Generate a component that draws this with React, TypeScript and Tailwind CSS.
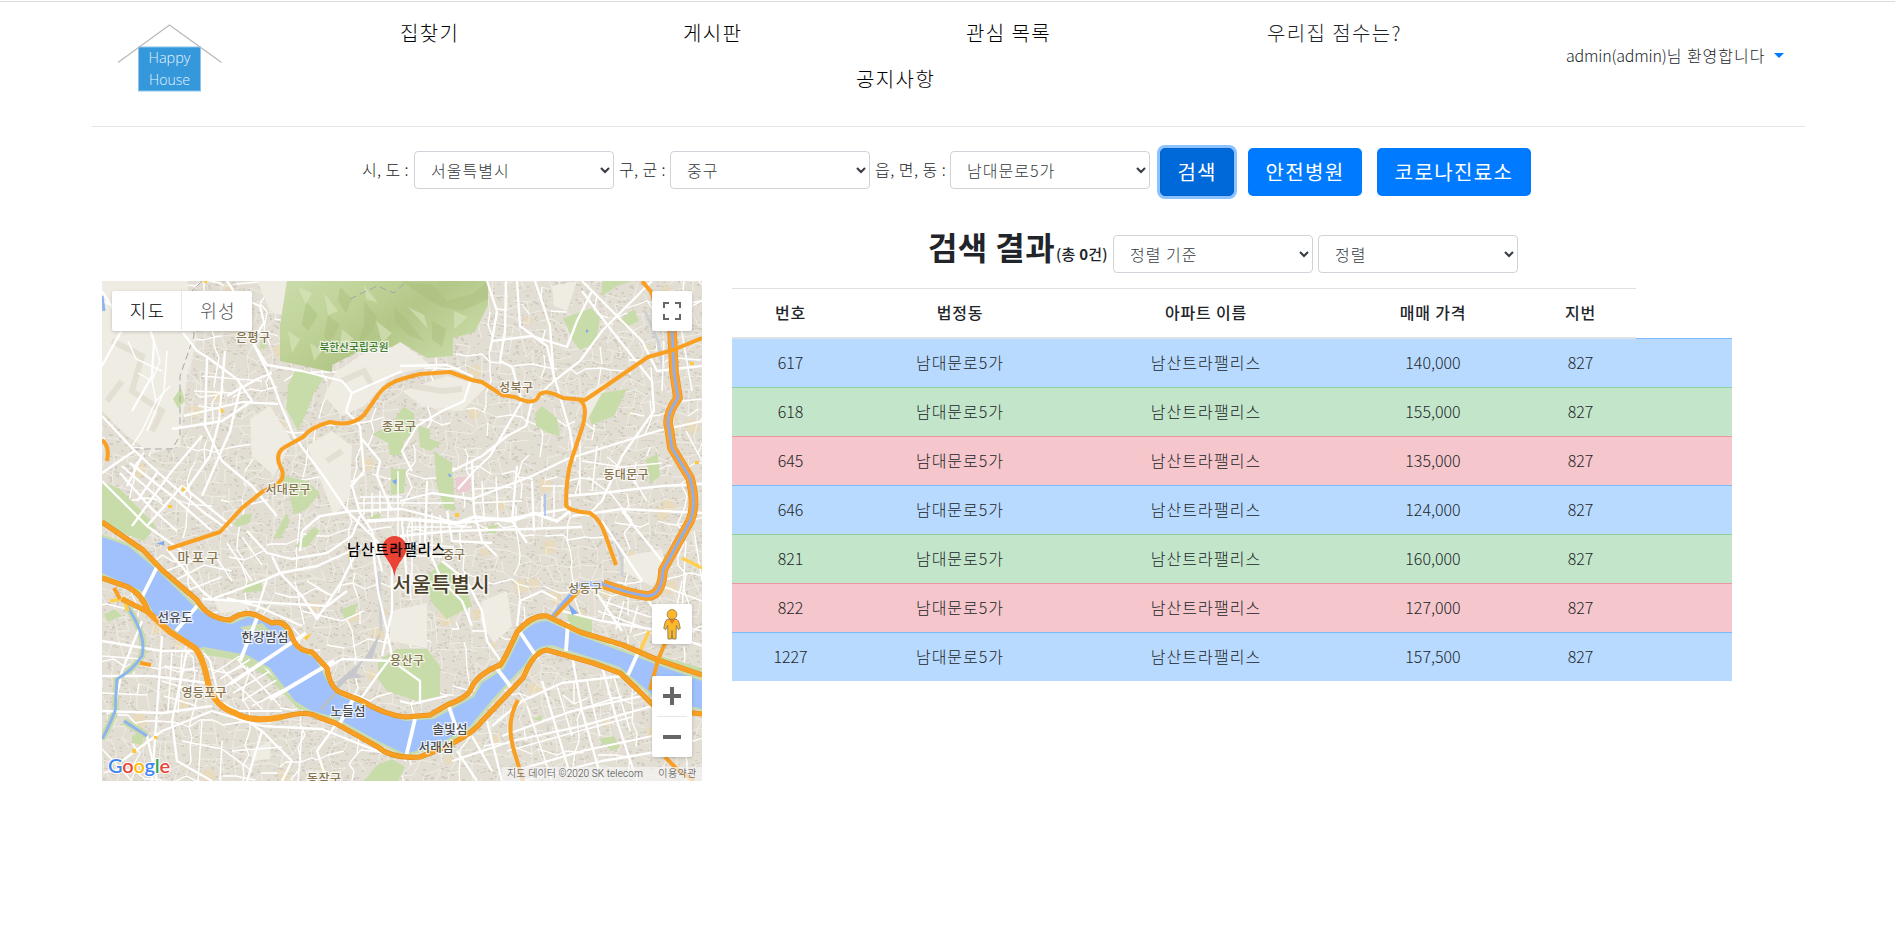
import React from "react";

const KR = "font-['Noto_Sans_CJK_KR',sans-serif]";

/* ---------- header ---------- */

function Logo() {
  return (
    <svg width="106" height="72" viewBox="0 0 106 72" className="block" fontFamily="'Open Sans', sans-serif">
      <rect x="21.5" y="24" width="62" height="44" fill="#3498db" stroke="#8cc6ee" strokeWidth="1" />
      <path d="M1 39.5 L52.5 2 L104.5 39.5" fill="none" stroke="#b9b9b9" strokeWidth="1.3" />
      <text x="52.5" y="40" fontSize="15" fill="#e6f3fc" textAnchor="middle" textLength="42" lengthAdjust="spacingAndGlyphs">Happy</text>
      <text x="52.5" y="61.5" fontSize="15" fill="#e6f3fc" textAnchor="middle" textLength="41" lengthAdjust="spacingAndGlyphs">House</text>
    </svg>
  );
}

function Header() {
  return (
    <header className="ml-[92px] flex h-[125px] w-[1713px] border-b border-[#e5e5e5]">
      <div className="w-[174px] pl-[25px] pt-[21px]">
        <Logo />
      </div>
      <nav className="w-[1221px] pt-[12px] text-[20px] leading-[38px] tracking-[1.4px] text-black">
        <div className="flex pl-[134px]">
          <a className="w-[283px]">집찾기</a>
          <a className="w-[283px]">게시판</a>
          <a className="w-[301px]">관심 목록</a>
          <a className="text-[#212529]">우리집 점수는?</a>
        </div>
        <div className="mt-[8px] pl-[590px]">
          <a>공지사항</a>
        </div>
      </nav>
      <div className="mt-[41px] flex h-[24px] flex-1 items-center whitespace-nowrap pl-[79px] text-[16px] text-[#212529]">
        <span className="tracking-[-0.2px]">admin(admin)</span>
        <span className="tracking-[1px]">님 환영합니다</span>
        <svg width="10" height="5" viewBox="0 0 10 5" className="ml-[8px]">
          <path d="M0 0H10L5 5Z" fill="#007bff" />
        </svg>
      </div>
    </header>
  );
}

/* ---------- form controls ---------- */

function Select({ label }: { label: string }) {
  return (
    <select className="h-[38px] w-[200px] rounded-[4px] border border-[#ced4da] bg-white px-[12px] text-[16px] font-light tracking-[1px] text-[#343a40]">
      <option>{label}</option>
    </select>
  );
}

function SearchBar() {
  return (
    <div className="mt-[21px] flex h-[48px] items-center pl-[362px] text-[16px] text-[#212529]">
      <span className="-mt-[7px] w-[52px] whitespace-nowrap tracking-[0.4px]">시, 도 :</span>
      <div className="-mt-[4px]"><Select label="서울특별시" /></div>
      <span className="-mt-[7px] ml-[5px] w-[51px] whitespace-nowrap tracking-[0.4px]">구, 군 :</span>
      <div className="-mt-[4px]"><Select label="중구" /></div>
      <span className="-mt-[7px] ml-[5px] w-[75px] whitespace-nowrap tracking-[0.5px]">읍, 면, 동 :</span>
      <div className="-mt-[4px]"><Select label="남대문로5가" /></div>
      <button className="ml-[10px] h-[48px] w-[74px] rounded-[5px] border border-[#0062cc] bg-[#0069d9] text-[20px] font-normal tracking-[1.2px] text-white shadow-[0_0_0_3px_rgba(0,123,255,0.45)]">검색</button>
      <button className="ml-[14px] h-[48px] w-[114px] rounded-[5px] bg-[#007bff] text-[20px] font-normal tracking-[1.3px] text-white">안전병원</button>
      <button className="ml-[15px] h-[48px] w-[154px] rounded-[5px] bg-[#007bff] text-[20px] font-normal tracking-[1.4px] text-white">코로나진료소</button>
    </div>
  );
}

/* ---------- map ---------- */

function seeded(seed: number) {
  let s = seed;
  return () => {
    s = (s * 1664525 + 1013904223) % 4294967296;
    return s / 4294967296;
  };
}

function buildStreets() {
  const rnd = seeded(17);
  const step = 11;
  const cols = 57;
  const rows = 48;
  const pts: number[][][] = [];
  for (let r = 0; r < rows; r++) {
    pts.push([]);
    for (let c = 0; c < cols; c++) {
      const x = c * step - 6 + (rnd() - 0.5) * 9 + Math.sin(r / 5) * 9;
      const y = r * step - 6 + (rnd() - 0.5) * 9 + Math.sin(c / 6) * 9;
      pts[r].push([Math.round(x), Math.round(y)]);
    }
  }
  let thin = "";
  let mid = "";
  for (let r = 0; r < rows - 1; r++) {
    for (let c = 0; c < cols - 1; c++) {
      const a = pts[r][c];
      const b = pts[r][c + 1];
      const d = pts[r + 1][c];
      if (rnd() < 0.6) thin += `M${a}L${b}`;
      if (rnd() < 0.6) thin += `M${a}L${d}`;
      if ((r + (c >> 4)) % 5 === 0 && rnd() < 0.8) mid += `M${a}L${b}`;
      if ((c + (r >> 4)) % 5 === 0 && rnd() < 0.8) mid += `M${a}L${d}`;
    }
  }
  let blocks = "";
  let tan = "";
  for (let i = 0; i < 9000; i++) {
    const x = Math.floor(rnd() * 600);
    const y = Math.floor(rnd() * 500);
    blocks += `M${x} ${y}h${1 + Math.floor(rnd() * 4)}v${1 + Math.floor(rnd() * 2)}h-2z`;
  }
  for (let i = 0; i < 80; i++) {
    const x = Math.floor(rnd() * 600);
    const y = Math.floor(rnd() * 500);
    const w = 4 + Math.floor(rnd() * 9);
    tan += `M${x} ${y}l${w} -2l3 ${w}l-${w} 3z`;
  }
  return { thin, mid, blocks, tan };
}

const streets = buildStreets();

const PLAIN = [
  "M0 0 L85 0 L95 55 L85 95 L78 165 L50 172 L25 155 L0 130Z",
  "M148 138 L168 125 L190 160 L172 195 L150 175Z",
  "M205 165 L230 150 L250 165 L248 215 L232 235 L215 190Z",
  "M235 90 L262 72 L300 62 L330 85 L290 95 L262 125 L240 135 L222 115Z",
  "M300 110 L345 95 L385 105 L360 130 L320 125Z",
  "M450 5 L475 0 L465 30 L452 25Z",
  "M525 275 L560 268 L565 290 L550 305 L520 290Z",
  "M288 330 L325 322 L325 367 L288 360Z",
  "M505 100 L485 110 L480 145 L500 120Z",
  "M185 0 L155 0 L168 30 L180 34Z",
  "M112 320 L150 322 L142 330 L118 332Z",
  "M148 470 L168 460 L168 478 L150 480Z",
  "M380 320 L405 310 L410 345 L392 362 L378 340Z",
];

const GREENS = [
  "M185 0 L386 0 L386 24 L373 51 L351 57 L351 75 L325 77 L298 61 L290 66 L256 71 L230 84 L230 91 L178 80 L178 44Z",
  "M194 88 L206 90 L221 98 L212 112 L205 130 L196 150 L190 138 L184 128 L186 104Z",
  "M461 37 L490 27 L498 37 L494 62 L478 69 L471 60Z",
  "M500 15 L515 5 L530 0 L500 0Z M517 40 L532 28 L537 40 L524 46Z",
  "M433 132 L440 125 L455 137 L458 155 L446 152 L434 145Z",
  "M500 112 L525 108 L512 135 L490 144 L487 136Z",
  "M544 178 L556 173 L558 195 L548 203Z",
  "M270 153 L290 143 L301 126 L312 132 L314 150 L302 160 L300 174 L288 174 L286 162Z",
  "M316 145 L328 148 L328 158 L340 162 L328 170 L318 166Z",
  "M332 170 L350 182 L353 230 L342 228 L335 205Z",
  "M289 188 L304 188 L302 212 L289 214Z",
  "M178 194 L205 200 L218 212 L205 228 L192 234 L187 214Z",
  "M131 243 L140 234 L150 232 L148 242 L136 246Z M172 256 L184 232 L188 240 L178 258Z M192 266 L212 246 L218 250 L205 266Z",
  "M0 200 L18 208 L54 245 L42 260 L15 250 L0 240Z",
  "M160 58 L164 52 L163 68 L157 68Z M71 118 L79 107 L83 120 L76 127Z",
  "M321 300 L340 280 L350 288 L362 300 L370 325 L345 338 L330 322Z",
  "M276 380 L295 368 L325 368 L338 385 L338 415 L315 420 L285 410 L276 398Z",
  "M146 302 L160 300 L160 310 L140 312Z M240 328 L256 322 L252 334 L242 338Z",
  "M465 330 L490 338 L490 354 L466 344Z",
  "M496 458 L512 455 L518 466 L510 470Z M430 438 L440 434 L440 440Z",
  "M262 500 L275 484 L290 478 L303 486 L296 500Z",
  "M103 364 L130 368 L160 380 L190 400 L206 430 L196 428 L165 395 L130 378 L102 374Z",
  "M20 335 L6 341 L2 334 L12 328Z M30 455 L42 450 L40 464 L30 462Z",
  "M558 375 L600 387 L600 394 L558 381Z M303 480 L345 468 L385 440 L378 440 L338 464Z",
  "M386 245 L396 243 L394 252 L386 252Z M268 235 L278 232 L278 240 L268 240Z",
];

const WHITE_ROADS = [
  "M125 0 L135 15 L158 25 L162 42 L150 60 L170 100 L178 122 L192 155 L222 196 L245 230 L275 260 L290 285",
  "M81 52 L95 70 L105 76 L135 98 L150 120 L120 140 L70 148 M82 135 L140 121 L176 123",
  "M150 60 L165 84 L200 90 L240 100 L250 112 L244 130 M170 92 L155 98 L125 115 M250 112 L300 90",
  "M105 76 L103 145 L120 180 L150 205 L175 235 M123 70 L117 140 L108 175 L80 215 M139 104 L128 150 L100 215",
  "M0 135 L33 170 L60 195 L100 230 L125 248 M0 192 L32 170 M30 245 L70 190 L100 155",
  "M0 200 L45 245 L80 270 M20 185 L60 220 M45 245 L80 205 L130 245 M70 215 L110 250",
  "M18 192 L50 228 L75 250 M28 182 L70 215 M40 175 L25 205 M55 192 L35 220",
  "M0 85 L22 45 L0 10 M0 20 L45 40 L52 60 L50 95 L30 130",
  "M244 130 L258 145 L262 190 L250 205 L258 232 L270 250 L280 290 M260 158 L278 180 L275 195 L290 230",
  "M200 250 L218 235 L250 230 L300 228 L355 242 L410 237 L440 232 L465 228 M200 250 L198 270",
  "M298 220 L330 212 L370 218 L430 195 L465 178 L555 150 L600 140",
  "M404 0 L403 50 L398 80 L410 86 L420 120 L388 175 L372 190 L356 208 M415 0 L418 45 L445 65 L452 95 L468 150 L473 180",
  "M433 0 L448 45 L452 100 L430 120 L424 145 L405 155 L380 175 L350 190",
  "M388 70 L390 60 L430 55 L465 66 L475 40 L490 10 M390 60 L395 30 L385 0",
  "M452 100 L478 80 L500 50 L530 20 L550 0 M480 0 L540 60 L555 90 L600 85",
  "M480 10 L510 50 L550 100 L552 130 L520 175 L500 220 L485 235",
  "M298 85 L345 84 L370 95 L362 120 L340 130 L315 145 L300 170 L310 190",
  "M370 180 L372 230 L380 260 L395 275 M415 185 L410 240 L425 262 M430 200 L432 250",
  "M464 215 L500 212 L560 205 L600 203 M470 235 L520 228 L600 232 M500 240 L540 300 M520 230 L560 280",
  "M300 240 L305 300 M325 200 L323 260 L340 300 L360 320 L370 345 M345 230 L350 260 L390 262",
  "M298 255 L350 250 L425 248 L480 246 M340 280 L365 300 L380 330 L385 360 L400 382",
  "M270 260 L276 310 L285 350 L290 375 L275 395 L250 430 M290 285 L290 330 L280 375",
  "M145 250 L165 272 L190 278 L225 272 L250 255 L258 235 M178 292 L170 275 M178 292 L215 285 L260 265",
  "M65 268 L100 310 L110 318 L165 298 L178 292 M100 318 L225 325 L245 310 M125 317 L155 325 L200 345",
  "M155 330 L165 298 L178 292 L200 315 L215 338 L240 300 L255 270",
  "M298 420 L310 423 L345 415 M318 423 L318 400 L290 380 L240 378 L225 387",
  "M116 420 L160 450 L145 500 M0 360 L60 370 L95 370 M40 340 L20 390 L12 430 M0 395 L50 395 L106 402",
  "M0 430 L60 432 L110 425 M20 480 L60 450 L110 430 L160 445 L220 448 L280 472 M60 355 L55 430 L50 500",
  "M85 370 L70 440 L75 480 L110 500 M45 455 L55 500 M160 450 L190 480 L180 500 M235 442 L215 470 L225 500",
  "M390 445 L420 420 L460 402 L520 395 M400 455 L470 430 L540 415 M350 480 L410 460 L480 445 L550 425",
  "M440 400 L455 450 L470 500 M470 375 L480 430 L500 500 M500 385 L515 440 L535 500 M430 485 L480 470 L550 455",
  "M355 470 L375 500 M385 440 L400 500 M370 455 L390 490 M420 500 L500 480 L560 470",
  "M415 345 L418 320 L440 310 L455 318 M460 330 L500 340 L560 350 L600 365 M490 305 L520 350 M540 310 L560 340",
];

const FINE_GRID = [
  "M258 216 L300 216 M255 222 L352 222 M262 216 L262 234 M270 212 L270 236 M278 210 L278 232 M286 214 L286 240",
  "M296 190 L296 262 M310 236 L310 300 M318 236 L318 270 M330 232 L330 280 M338 234 L340 262 M305 246 L370 246 M300 262 L352 266 M300 274 L340 276",
  "M372 208 L410 206 M372 222 L420 220 M380 200 L382 236 M394 196 L396 240 M440 205 L462 205 M440 215 L440 246 M452 205 L452 236",
  "M480 180 L520 186 L560 182 M486 196 L510 214 L530 240 M505 176 L530 196 L545 220 M478 160 L478 214 M495 165 L490 210",
  "M112 392 L142 372 M118 398 L150 377 M124 405 L158 384 M131 412 L168 390 M140 420 L178 397 M150 425 L188 405 M120 388 L160 428 M135 378 L178 425 M150 374 L192 415",
  "M26 60 L34 78 L60 90 M65 70 L62 110 L45 150 M110 20 L122 50 M100 95 L160 100 M92 110 L130 112 M96 125 L118 128",
  "M0 375 L40 378 M0 412 L45 414 M62 385 L96 390 M60 400 L100 412 M62 415 L95 425 M70 372 L66 430 M80 372 L76 432",
  "M120 460 L118 500 M100 440 L96 500 M130 470 L180 466 M80 460 L120 468 L150 490 M200 450 L196 500 M0 468 L30 500",
  "M405 470 L470 452 L530 436 M410 490 L460 476 M425 425 L450 500 M455 405 L470 455 M485 400 L498 455 M512 396 L528 450 M440 440 L520 415",
  "M500 320 L545 335 L600 350 M496 330 L540 346 M508 316 L500 340 M522 320 L514 348 M536 325 L528 352 M580 300 L570 350 M560 305 L600 320",
  "M560 110 L562 60 M582 0 L578 40 L590 110 M600 20 L580 30 M584 150 L600 180 M580 120 L600 118 M592 250 L600 300 M584 260 L580 330",
  "M64 290 L90 280 M72 300 L102 284 L130 290 M84 310 L120 296 M110 270 L130 300 M125 262 L150 300 M140 256 L160 284 M205 300 L230 315 M200 330 L240 340 L262 330",
];

const BRIDGES = [
  "M55 286 L40 316", "M95 325 L74 350", "M155 337 L138 380", "M204 352 L128 403", "M232 380 L168 418",
  "M253 415 L238 442", "M313 438 L303 480", "M347 426 L356 452", "M393 385 L412 410", "M418 351 L436 378",
  "M466 341 L464 370", "M536 372 L526 394",
];

const HIGHWAYS = [
  "M66 268 L118 251 L140 227 L160 211 L174 204 Q183 198 180 189 Q171 173 183 166 L201 156 Q209 146 228 141 Q250 146 262 134 L276 114 Q284 102 303 97 L318 93 L348 91 L370 99 L380 101 L400 114 L413 116 Q432 125 436 116 Q440 106 461 117 L483 119 L495 111 L546 76 L571 69 L600 57",
  "M478 119 Q486 125 481 144 L470 177 Q464 195 464 224 Q466 230 488 232 Q498 238 503 253 L514 284",
  "M0 159 Q8 165 5 180",
  "M548 409 L556 379 L566 355 M416 419 Q404 440 411 466 L421 500",
  "M540 0 L550 12 L554 30 M563 476 L575 488 L592 500",
  "M38 382 L49 384 M12 307 L18 318",
];

const BANKS = [
  "M0 241 L41 269 L60 289 L95 319 Q106 338 128 339 Q143 328 156 335 L170 342 Q184 338 190 356 Q195 370 210 371 L225 387 Q228 408 240 412 L260 420 Q283 434 303 436 L328 434 L345 424 Q366 416 369 408 Q374 394 398 384 Q402 380 415 351 Q430 333 445 335 L478 351 L521 364 L556 379 L600 394",
  "M0 297 L26 306 Q42 315 46 331 L68 351 L93 367 Q101 376 106 402 Q112 425 133 432 Q150 442 180 436 Q206 429 216 436 L233 442 L276 466 Q290 478 318 476 L341 467 Q371 453 380 440 L421 397 Q432 370 445 369 L491 382 L518 392 L538 411 L551 424 L591 432 L600 433",
  "M20 318 L46 331",
];

const STREAM = "M570 49 L572 91 L576 117 Q563 135 567 147 L570 167 L588 197 Q595 225 588 240 L561 289 Q560 315 545 315 Q528 313 501 303";
const STREAM_TAIL = "M501 303 L480 303 L462 322 L450 337";

const RIVER =
  "M0 256 L26 265 L55 289 L93 326 Q115 342 130 343 L146 336 L180 346 L195 369 L213 377 L226 402 L240 416 L303 440 L332 438 L372 416 L380 402 L402 388 L420 352 Q432 340 445 340 L478 355 L556 384 L600 400 L600 428 L553 416 L518 386 L491 377 L450 364 Q432 364 424 382 L395 413 L367 446 L335 464 L303 473 L276 460 L233 436 L210 430 L193 420 L168 387 L145 374 L103 366 L96 367 L53 335 L40 310 L0 292Z";

type Label = [string, number, number, number, string, number];
const LABELS: Label[] = [
  ["은평구", 151, 57, 12, "#857550", 34],
  ["북한산국립공원", 252, 66, 10.7, "#3c7a2c", 69],
  ["종로구", 297, 146, 12, "#857550", 34],
  ["서대문구", 186, 209, 12, "#857550", 45],
  ["성북구", 414, 107, 12, "#857550", 34],
  ["동대문구", 524, 194, 12, "#857550", 45],
  ["마포구", 96, 276, 13, "#857550", 41],
  ["선유도", 73, 336, 12.5, "#4e4e4e", 35],
  ["한강밤섬", 163, 356, 12.5, "#4e4e4e", 47],
  ["영등포구", 102, 412, 12, "#857550", 45],
  ["노들섬", 246, 430, 12.5, "#4e4e4e", 35],
  ["동작구", 222, 498, 12, "#857550", 34],
  ["용산구", 305, 380, 12, "#857550", 34],
  ["중구", 352, 274, 12, "#857550", 22],
  ["성동구", 483, 308, 12, "#857550", 34],
  ["솔빛섬", 348, 448, 12.5, "#4e4e4e", 35],
  ["서래섬", 334, 466, 12.5, "#4e4e4e", 35],
];

function MapDrawing() {
  return (
    <svg width="600" height="500" viewBox="0 0 600 500" className="block" fontFamily="'Noto Sans CJK KR', sans-serif">
      <defs>
        <linearGradient id="hill" x1="0" y1="0" x2="1" y2="0.6">
          <stop offset="0" stopColor="#cadcab" />
          <stop offset="0.35" stopColor="#bfd398" />
          <stop offset="0.6" stopColor="#b3c788" />
          <stop offset="1" stopColor="#c8dba6" />
        </linearGradient>
      </defs>
      <rect width="600" height="500" fill="#e3ded4" />
      <path d={streets.blocks} fill="#d2cbc0" />
      <path d={streets.tan} fill="#e8dab8" opacity="0.8" />
      <path d={streets.thin} fill="none" stroke="#f1eee8" strokeWidth="0.9" />
      <path d={streets.mid} fill="none" stroke="#ffffff" strokeWidth="1.3" />
      {PLAIN.map((d, i) => (
        <path key={i} d={d} fill="#efece4" />
      ))}
      <path d="M10 60 L40 75 L30 110 L60 130 L50 150 M20 100 L5 120 M240 100 L262 90 L270 105 M225 180 L240 170 M310 105 L340 110 L360 108" fill="none" stroke="#e4dfd3" strokeWidth="6" />
      <path d="M52 60 L58 80 L50 100 L54 120 L40 150 L30 165 M54 120 L68 105 M50 100 L36 92" fill="none" stroke="#fff" strokeWidth="1.4" />
      {GREENS.map((d, i) => (
        <path key={i} d={d} fill={i === 0 ? "url(#hill)" : "#c8dcaa"} />
      ))}
      <g fill="#a9be7c" opacity="0.45">
        <path d="M300 0 L330 4 L345 20 L372 12 L386 0 L386 18 L360 30 L340 26 L322 16Z" />
        <path d="M262 20 L275 36 L270 52 L256 62 L262 44Z M292 26 L306 40 L322 60 L306 54 L294 42Z M226 34 L238 44 L228 62 L222 56Z" />
        <path d="M204 20 L216 34 L206 50 L200 44Z M238 6 L250 18 L244 32 L236 20Z M330 40 L344 48 L340 66 L330 58Z" />
      </g>
      <g fill="#dbe6bd" opacity="0.6">
        <path d="M196 6 L210 12 L204 24Z M222 12 L236 30 L226 34Z M262 4 L276 22 L264 18Z M274 40 L290 52 L280 62Z M240 48 L252 58 L238 64Z" />
        <path d="M306 26 L322 34 L326 48Z M352 30 L366 36 L352 48Z M186 50 L198 58 L190 72Z M208 62 L220 70 L212 80Z" />
      </g>
      <path d="M100 0 L90 10 L92 55 L78 95 L78 155 L70 168 L30 168 M248 18 L275 5 L292 12 L305 0" fill="none" stroke="#a5a5a5" strokeWidth="1" strokeDasharray="7 4" />
      <g fill="none" stroke="#cfd0d2" strokeWidth="3">
        <path d="M543 30 L556 60 L562 95 M510 250 L520 280 M520 275 L520 295 M277 290 L279 350" />
      </g>
      <path d="M236 400 L250 388 L262 378 L254 392 L262 396 L246 398 L234 410Z M279 350 L270 378 L262 378" fill="#c6c8cc" />
      <path d="M354 197 L368 194 L368 210 L354 212Z" fill="#ecccd0" />
      <path d="M25 325 Q45 355 40 375 Q30 390 15 398 L13 430 Q5 450 0 458 M22 440 L45 455" fill="none" stroke="#c8dcaa" strokeWidth="7" />
      <g fill="none" stroke="#ffffff" strokeWidth="1.5">
        {FINE_GRID.map((d, i) => (
          <path key={i} d={d} />
        ))}
      </g>
      <g fill="none" stroke="#ffffff" strokeWidth="2.3" strokeLinejoin="round">
        {WHITE_ROADS.map((d, i) => (
          <path key={i} d={d} />
        ))}
      </g>
      <path d="M265 240 L300 238 L355 242 L372 236 L410 240 L432 232 L455 240 L468 230" fill="none" stroke="#fff" strokeWidth="3.4" />
      <path d="M25 325 Q45 355 40 375 Q30 390 15 398 L13 430 Q5 450 0 458 M22 440 L45 455 M0 15 L2 30" fill="none" stroke="#8fb3ee" strokeWidth="3" />
      <path d="M443 213 L443 235" stroke="#9dbcf0" strokeWidth="1.5" />
      <path d={RIVER} fill="#c8dcb0" stroke="#c8dcb0" strokeWidth="5" />
      <path d={RIVER} fill="#a0c1fc" />
      <path d="M54 263 L62 260 L62 264Z M466 322 L476 332 L470 334Z M290 200 L295 198 L294 204Z M346 192 L350 195 L347 196Z M484 48 L487 50 L484 52Z" fill="#7ba7f3" />
      <path d="M138 346 L160 342 L168 350 L142 350Z" fill="#c8dcb0" />
      <path d="M235 411 L219 428" stroke="#b9bdc6" strokeWidth="3" />
      {BRIDGES.map((d, i) => (
        <path key={i} d={d} stroke="#ffffff" strokeWidth="3.8" />
      ))}
      <path d="M102 372 L108 380 L118 420 L135 430 L180 430" fill="none" stroke="#fff" strokeWidth="2" />
      <path d="M8 320 L22 318 L26 330 M38 318 L46 330 M547 350 L538 370 M580 277 L600 287" fill="none" stroke="#ffd04d" strokeWidth="3.6" />
      <g fill="#ffc83d">
        <path d="M118 126l5 5l-4 1z M80 205l4 4l-4 2z M66 224h4v3h-4z M353 232h4v4h-4z M588 81h4v3h-4z M593 180h4v3h-4z M30 468h4v4h-4z M52 455h3v3h-3z M100 0h5v3z M202 356l8-4l-6 8z" />
      </g>
      <g fill="none" strokeLinejoin="round">
        <path d={STREAM_TAIL} stroke="#8fb3f2" strokeWidth="5" />
        <path d="M453 335 L478 309" stroke="#f99f22" strokeWidth="3.6" />
        <path d={STREAM} stroke="#e5921f" strokeWidth="9.6" />
        <path d={STREAM} stroke="#f9a12c" strokeWidth="8.4" />
        <path d={STREAM} stroke="#8fb0f0" strokeWidth="2.8" />
        <g stroke="#dd8c1d" strokeWidth="5.2">
          {BANKS.map((d, i) => (
            <path key={i} d={d} />
          ))}
        </g>
        <g stroke="#f99f22" strokeWidth="4.2">
          {BANKS.map((d, i) => (
            <path key={i} d={d} />
          ))}
        </g>
        <path d="M46 331 L68 351 L93 367 Q101 376 106 402 Q112 425 133 432 Q150 442 180 436" stroke="#f99f22" strokeWidth="6" />
        <g stroke="#f99f22" strokeWidth="4">
          {HIGHWAYS.map((d, i) => (
            <path key={i} d={d} />
          ))}
        </g>
      </g>
      {LABELS.map(([t, x, y, size, color, len]) => (
        <text key={t} x={x} y={y + size * 0.36} fontSize={size} textAnchor="middle" textLength={len} fill={color} fontWeight="500" stroke="#ffffff" strokeOpacity="0.75" strokeWidth="2.4" paintOrder="stroke">
          {t}
        </text>
      ))}
      <text x="339" y="311" fontSize="20.5" textAnchor="middle" textLength="97" fill="#4a3f2a" fontWeight="500" stroke="#ffffff" strokeOpacity="0.75" strokeWidth="3" paintOrder="stroke">
        서울특별시
      </text>
      <path d="M292.5 296 C291 281 280.5 277 280.5 267 A12 12 0 0 1 304.5 267 C304.5 277 294 281 292.5 296Z" fill="#ea4335" />
      <circle cx="292.5" cy="267" r="4.5" fill="#b31412" opacity="0.45" />
      <text x="294" y="273.5" fontSize="14.5" textAnchor="middle" textLength="98" fill="#000000" fontWeight="500">
        남산트라팰리스
      </text>
      <text x="6" y="492" fontFamily="Lato, sans-serif" fontSize="20" fontWeight="600" textLength="62" stroke="#ffffff" strokeWidth="2" paintOrder="stroke">
        <tspan fill="#4285f4">G</tspan>
        <tspan fill="#ea4335">o</tspan>
        <tspan fill="#fbbc04">o</tspan>
        <tspan fill="#4285f4">g</tspan>
        <tspan fill="#34a853">l</tspan>
        <tspan fill="#ea4335">e</tspan>
      </text>
    </svg>
  );
}

function MapPanel() {
  const box = "absolute bg-white rounded-[2px] shadow-[0_1px_4px_-1px_rgba(0,0,0,0.3)]";
  return (
    <div className="relative h-[500px] w-[600px] overflow-hidden">
      <MapDrawing />
      <div className={`${box} left-[10px] top-[10px] flex h-[40px] w-[140px] items-center pb-[1px] text-[18px] tracking-[1.2px]`}>
        <span className="flex h-full w-[70px] items-center justify-center border-r border-[#e6e6e6] pl-[2px] text-black">지도</span>
        <span className="flex h-full w-[70px] items-center justify-center pl-[2px] text-[#565656]">위성</span>
      </div>
      <div className={`${box} left-[550px] top-[10px] flex h-[40px] w-[40px] items-center justify-center`}>
        <svg width="18" height="18" viewBox="0 0 18 18" fill="#666666">
          <path d="M0 0v6h2V2h4V0zM16 0h-4v2h4v4h2V0zM16 16h-4v2h6v-6h-2zM2 12H0v6h6v-2H2z" />
        </svg>
      </div>
      <div className={`${box} left-[550px] top-[323px] flex h-[40px] w-[40px] items-center justify-center`}>
        <svg width="18" height="31" viewBox="0 0 18 31">
          <path d="M4 10.5 Q9 8.5 14 10.5 Q16 11.5 17.2 19.5 L15.2 20.5 L13.3 16.5 L13 30 H9.6 L9 21.5 L8.4 30 H5 L4.7 16.5 L2.8 20.5 L.8 19.5 Q2 11.5 4 10.5Z" fill="#fbb829" stroke="#8a7a55" strokeWidth="0.9" />
          <path d="M5.6 10 H12.4 L9 15Z" fill="#e8792a" />
          <circle cx="9" cy="5.4" r="4.9" fill="#fbb829" stroke="#8a7a55" strokeWidth="0.8" />
        </svg>
      </div>
      <div className={`${box} left-[550px] top-[395px] flex h-[81px] w-[40px] flex-col items-center`}>
        <div className="flex h-[40px] items-center">
          <svg width="18" height="18" viewBox="0 0 18 18" fill="#666666">
            <path d="M7 0h4v7h7v4h-7v7H7v-7H0V7h7z" />
          </svg>
        </div>
        <div className="h-px w-[30px] bg-[#e6e6e6]" />
        <div className="flex h-[40px] items-center">
          <svg width="18" height="4" viewBox="0 0 18 4" fill="#666666">
            <path d="M0 0h18v4H0z" />
          </svg>
        </div>
      </div>
      <div className="absolute bottom-0 right-0 flex h-[14px] w-[200px] items-center justify-between whitespace-nowrap bg-[#f5f5f5]/70 pb-[1px] pl-[5px] pr-[5px] font-[Roboto,'Noto_Sans_CJK_KR',sans-serif] text-[10px] text-[#444444]">
        <span className="tracking-[0.1px]">지도 데이터 ©2020 SK telecom</span>
        <span className="tracking-[0.5px]">이용약관</span>
      </div>
    </div>
  );
}

/* ---------- results ---------- */

const COLS = "grid grid-cols-[117px_222px_270px_184px_111px_96px]";
const HEADS = ["번호", "법정동", "아파트 이름", "매매 가격", "지번"];
const ROWS: [string, string][] = [
  ["617", "140,000"],
  ["618", "155,000"],
  ["645", "135,000"],
  ["646", "124,000"],
  ["821", "160,000"],
  ["822", "127,000"],
  ["1227", "157,500"],
];
const TONES = [
  "bg-[#b8daff] border-[#7abaff]",
  "bg-[#c3e6cb] border-[#8fd19e]",
  "bg-[#f5c6cb] border-[#ed969e]",
];

function Results() {
  return (
    <section className="w-[1000px] text-[#212529]">
      <div className="flex h-[53px] pl-[196px]">
        <h2 className="-mt-[4px] w-[128px] whitespace-nowrap text-[32px] font-bold leading-[30px] tracking-[0.4px]">검색 결과</h2>
        <span className="w-[57px] whitespace-nowrap pt-[7px] text-[15px] font-medium leading-[24px] tracking-[0.2px]">
          (총 <b className="font-bold">0</b>건)
        </span>
        <Select label="정렬 기준" />
        <div className="ml-[5px]"><Select label="정렬" /></div>
      </div>
      <div className={`${COLS} h-[51px] text-[16px] font-medium tracking-[0.8px]`}>
        {HEADS.map((h) => (
          <div key={h} className="flex items-center justify-center border-b-2 border-t border-[#dee2e6] pb-[2px]">{h}</div>
        ))}
        <div className="border-b border-[#7abaff]" />
      </div>
      {ROWS.map(([no, price], i) => (
        <div key={no} className={`${COLS} ${TONES[i % 3]} ${i === 0 ? "h-[48px]" : "h-[49px] border-t"} items-center pb-[2px] text-center text-[16px]`}>
          <span>{no}</span>
          <span className="tracking-[1px]">남대문로5가</span>
          <span className="tracking-[1.1px]">남산트라팰리스</span>
          <span>{price}</span>
          <span>827</span>
        </div>
      ))}
    </section>
  );
}

export default function App() {
  return (
    <div className={`h-[937px] w-[1895px] overflow-hidden bg-white pt-px font-light ${KR}`}>
      <div className="h-px bg-[#dadce0]" />
      <Header />
      <SearchBar />
      <main className="mt-[39px] flex pl-[102px]">
        <div className="mt-[46px]">
          <MapPanel />
        </div>
        <div className="ml-[30px]">
          <Results />
        </div>
      </main>
    </div>
  );
}
